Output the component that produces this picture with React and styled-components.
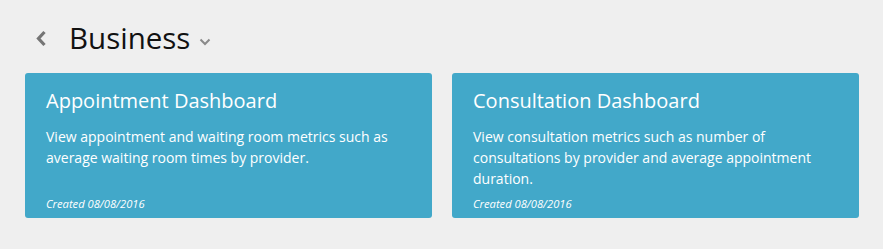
import React from "react";
import styled, { createGlobalStyle } from "styled-components";

const GlobalStyle = createGlobalStyle`
  html, body {
    margin: 0;
    padding: 0;
    background: #efefef;
    font-family: "Open Sans", "Liberation Sans", sans-serif;
  }
`;

const dashboards = [
  {
    title: "Appointment Dashboard",
    text: "View appointment and waiting room metrics such as average waiting room times by provider.",
    created: "08/08/2016",
  },
  {
    title: "Consultation Dashboard",
    text: "View consultation metrics such as number of consultations by provider and average appointment duration.",
    created: "08/08/2016",
  },
];

export default function App() {
  return (
    <Page>
      <GlobalStyle />
      <Header>
        <BackButton aria-label="Back">
          <svg width="12" height="17" viewBox="0 0 12 17">
            <path d="M9.5 2 L3.5 8.5 L9.5 15" fill="none" stroke="#757575" strokeWidth="3.2" />
          </svg>
        </BackButton>
        <Title>Business</Title>
        <Caret width="12" height="8" viewBox="0 0 12 8">
          <path d="M1.5 1.5 L6 6 L10.5 1.5" fill="none" stroke="#8a8a8a" strokeWidth="2" />
        </Caret>
      </Header>
      <Grid>
        {dashboards.map((d) => (
          <Card key={d.title}>
            <CardTitle>{d.title}</CardTitle>
            <CardText>{d.text}</CardText>
            <Created>Created {d.created}</Created>
          </Card>
        ))}
      </Grid>
    </Page>
  );
}

const Page = styled.div`
  padding: 16px 25px 0 25px;
`;

const Header = styled.div`
  display: flex;
  align-items: center;
  height: 44px;
  margin-bottom: 13px;
`;

const BackButton = styled.button`
  background: none;
  border: 0;
  padding: 0;
  margin-left: 10px;
  margin-right: 22px;
  display: flex;
  cursor: pointer;
`;

const Title = styled.h1`
  margin: 0;
  font-weight: 400;
  font-size: 29.5px;
  line-height: 44px;
  color: #111;
`;

const Caret = styled.svg`
  margin-left: 9px;
  margin-top: 7px;
`;

const Grid = styled.div`
  display: grid;
  grid-template-columns: 407px 407px;
  gap: 20px;
`;

const Card = styled.div`
  height: 145px;
  box-sizing: border-box;
  background: #42a8c9;
  border-radius: 3px;
  padding: 14px 21px 6px 21px;
  display: flex;
  flex-direction: column;
  color: #fff;
`;

const CardTitle = styled.h2`
  margin: 0;
  font-weight: 400;
  font-size: 20px;
  line-height: 28px;
`;

const CardText = styled.p`
  margin: 11px 0 0 0;
  font-size: 14px;
  line-height: 21px;
`;

const Created = styled.div`
  margin-top: auto;
  font-size: 11.2px;
  line-height: 16px;
  font-style: italic;
`;
